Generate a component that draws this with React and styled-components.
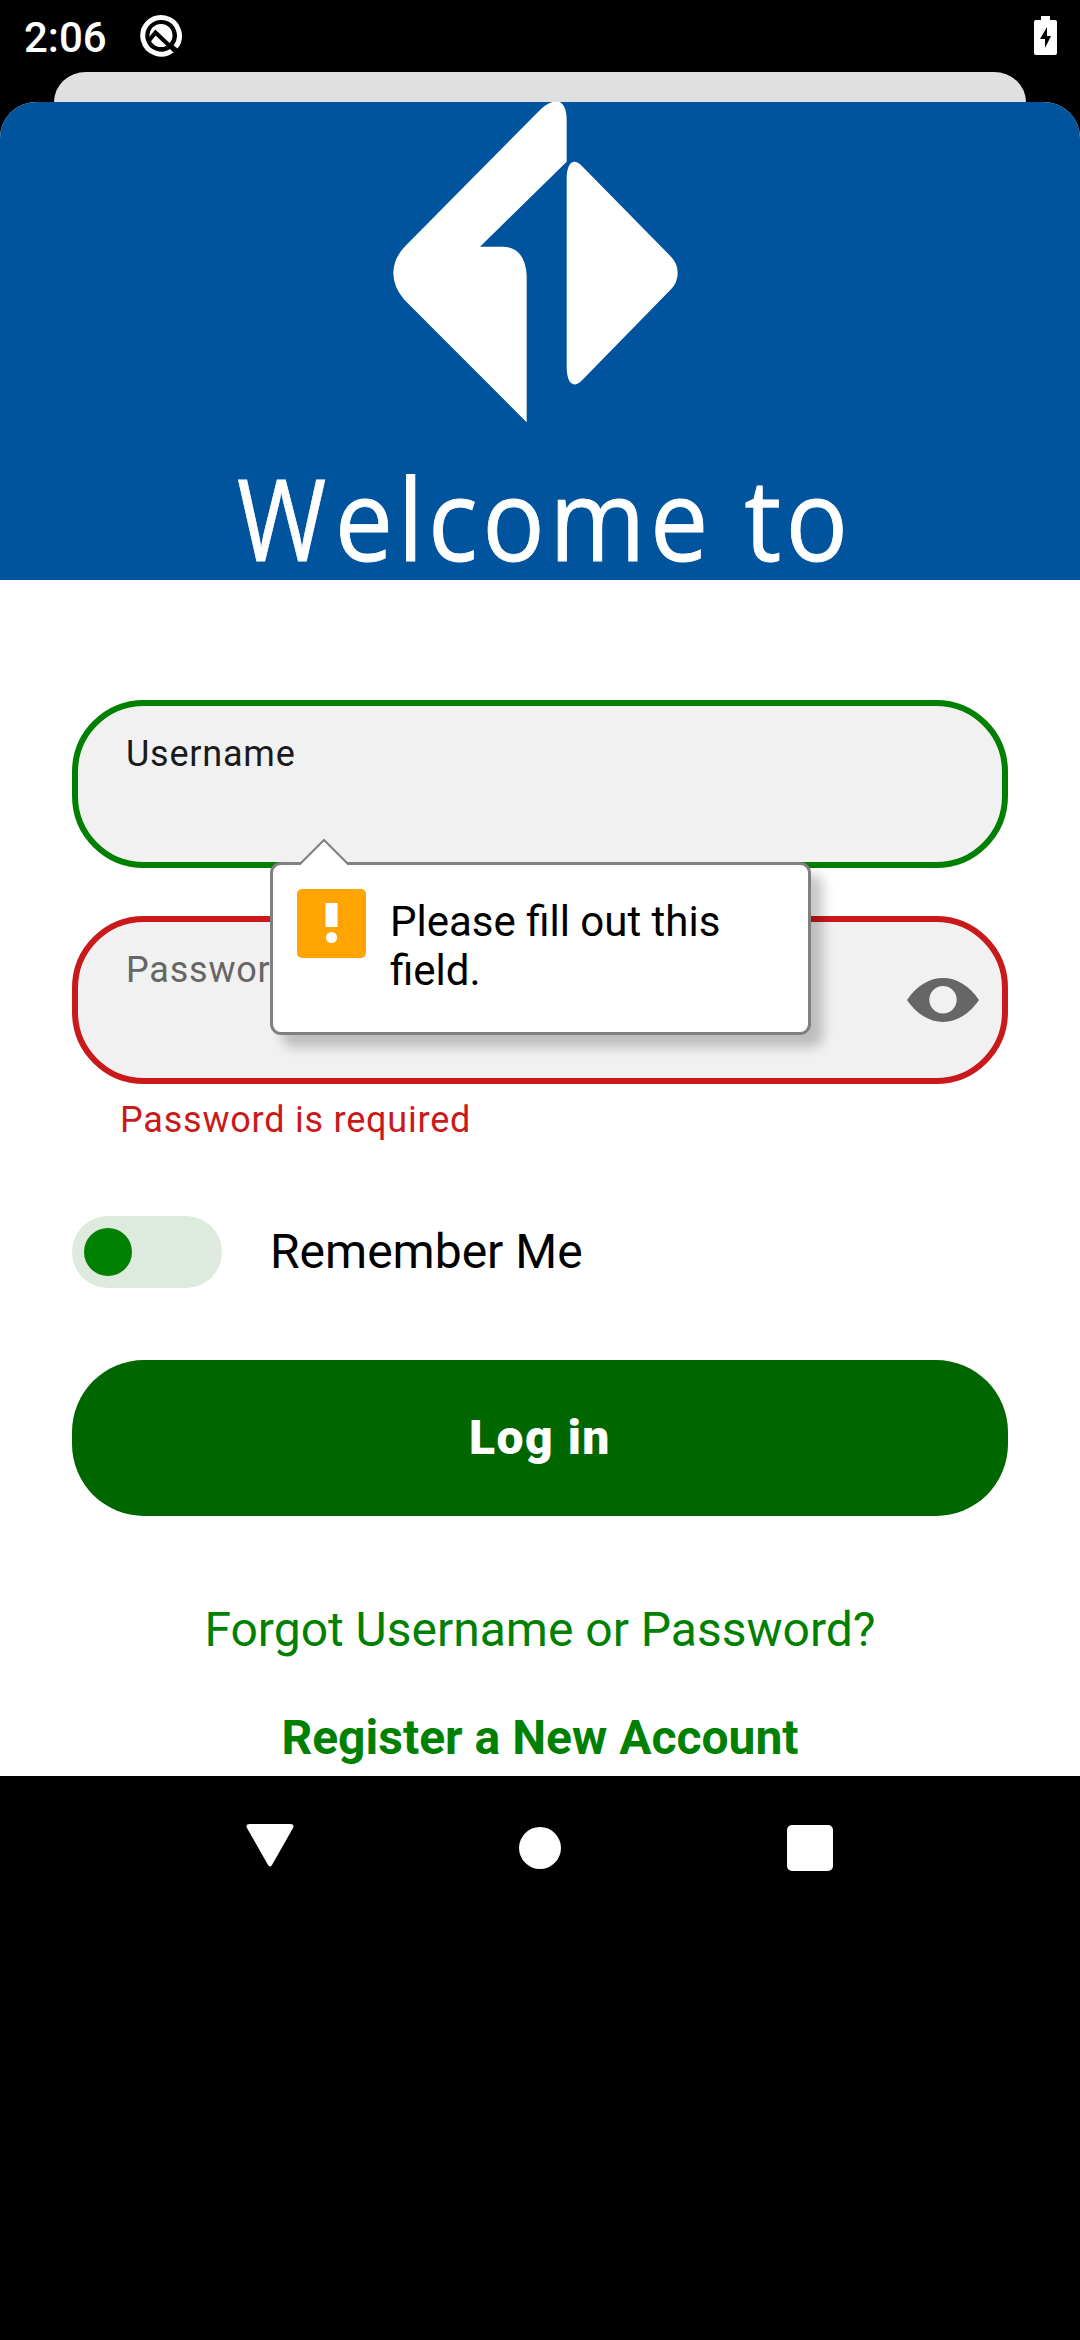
import React from "react";
import styled, { createGlobalStyle } from "styled-components";

const Global = createGlobalStyle`
  *, *::before, *::after { box-sizing: border-box; }
  html, body { margin: 0; background: #000; }
  body { font-family: Roboto, "Noto Sans", sans-serif; font-weight: 400; }
  svg { display: block; flex: none; }
`;

const Screen = styled.main`
  width: 1080px;
  height: 2340px;
  display: flex;
  flex-direction: column;
  background: #000;
  overflow: hidden;
`;

const StatusBar = styled.header`
  height: 72px;
  padding: 0 23px 0 24px;
  display: flex;
  align-items: center;
  color: #fff;
`;

const Clock = styled.time`
  width: 115px;
  font-size: 42px;
  line-height: 48px;
  font-weight: 500;
  padding-top: 3px;
`;

const BatterySlot = styled.div`
  margin-left: auto;
`;

const BackSheet = styled.div`
  height: 30px;
  margin: 0 54px;
  border-radius: 32px 32px 0 0 / 30px 30px 0 0;
  background: #e0e0e0;
`;

const Sheet = styled.section`
  height: 1674px;
  border-radius: 36px 36px 0 0;
  background: #fff;
  overflow: hidden;
`;

const Hero = styled.div`
  height: 478px;
  background: #00549d;
  display: flex;
  flex-direction: column;
  padding-left: 370px;
`;

const Welcome = styled.h1`
  margin: 25px 0 0 -133px;
  font-family: "Open Sans", "Noto Sans", sans-serif;
  font-size: 113px;
  line-height: 140px;
  font-weight: 400;
  letter-spacing: 4.8px;
  white-space: nowrap;
  color: #fff;
  -webkit-text-stroke: 0.8px #fff;
  transform: scaleX(0.92);
  transform-origin: left;
`;

const Initial = styled.span`
  display: inline-block;
  margin-right: -3px;
  transform: scaleX(0.93);
  transform-origin: left;
`;

const Form = styled.form`
  padding: 120px 72px 0;
  display: flex;
  flex-direction: column;
`;

const Field = styled.div`
  position: relative;
  height: 168px;
  border: 6px solid ${(p) => p.$tone};
  border-radius: 72px;
  background: #f1f1f1;
  padding: 26px 23px 0 48px;
  display: flex;
  justify-content: space-between;
  margin-bottom: ${(p) => p.$gap}px;
`;

const Label = styled.label`
  font-size: 36px;
  line-height: 44px;
  letter-spacing: 0.78px;
  color: ${(p) => p.$color};
`;

const EyeSlot = styled.span`
  padding-top: 30px;
`;

const ErrorText = styled.p`
  margin: 0 0 74px 48px;
  font-size: 36px;
  line-height: 44px;
  letter-spacing: 0.78px;
  color: #ca191b;
`;

const RememberRow = styled.div`
  height: 72px;
  display: flex;
  align-items: center;
  gap: 48px;
  font-size: 48px;
  line-height: 56px;
  color: #000;
`;

const Toggle = styled.span`
  width: 150px;
  height: 72px;
  border-radius: 36px;
  padding: 12px;
  background: #deeade;
`;

const Knob = styled.span`
  display: block;
  width: 48px;
  height: 48px;
  border-radius: 50%;
  background: #008000;
`;

const LoginButton = styled.button`
  height: 156px;
  margin: 72px 0 86px;
  border: 0;
  border-radius: 72px;
  background: #006600;
  color: #fff;
  font: 900 48px/56px Roboto, sans-serif;
  letter-spacing: 1.5px;
`;

const TextLink = styled.a`
  align-self: center;
  font-size: 48px;
  line-height: 56px;
  margin-bottom: 52px;
  color: #008000;
  white-space: nowrap;
  font-weight: ${(p) => (p.$strong ? 700 : 400)};
`;

const Tooltip = styled.div`
  position: absolute;
  z-index: 2;
  top: 156px;
  left: 192px;
  width: 541px;
  height: 173px;
  border: 3px solid #808080;
  border-radius: 11px;
  background: #fff;
  box-shadow: 12px 12px 12px rgba(0, 0, 0, 0.22);
  display: flex;
  gap: 24px;
  padding: 24px 24px 0;
`;

const Arrow = styled.svg`
  position: absolute;
  top: -27px;
  left: 26px;
`;

const TooltipText = styled.p`
  margin: 8px 0 0;
  font-size: 42px;
  line-height: 49px;
  color: #000;
`;

const NavBar = styled.nav`
  height: 144px;
  padding: 0 135px;
  display: grid;
  grid-template-columns: repeat(3, 1fr);
  align-items: center;
  justify-items: center;
`;

function QIcon() {
  return (
    <svg width="44" height="44" viewBox="0 0 44 44" fill="none">
      <path d="M33.8 35.9A18.3 18.3 0 1 1 36.6 33" stroke="#fff" strokeWidth="5" />
      <circle cx="22" cy="21.5" r="11.5" fill="#fff" />
      <path d="M10 26.5L16.5 18.5L36 37" stroke="#000" strokeWidth="4.2" />
    </svg>
  );
}

function BatteryIcon() {
  return (
    <svg width="24" height="40" viewBox="0 0 24 40">
      <path d="M8 0h9v4h5q2 0 2 2v31q0 2-2 2H3q-2 0-2-2V6q0-2 2-2h5z" fill="#fff" />
      <path d="M14 11v9h4L12 32v-9H7z" fill="#000" />
    </svg>
  );
}

function BrandMark() {
  return (
    <svg width="340" height="320" viewBox="0 36 1020 960" fill="#fff">
      <path d="M590 215V90C590 18 545 22 504 66L106 468Q70 505 70 550Q70 592 103 629L470 997V556Q465 472 398 470H330Z" />
      <path d="M590 262C592 214 612 206 632 224L903 500Q923 520 923 548Q923 577 903 598L634 873C612 893 592 885 590 835Z" />
    </svg>
  );
}

function EyeIcon() {
  return (
    <svg width="72" height="44" viewBox="0 0 72 44">
      <path
        fillRule="evenodd"
        fill="#666"
        d="M0 22C20-7.3 52-7.3 72 22C52 51.3 20 51.3 0 22ZM36 8a13.7 13.7 0 1 0 0 27.4a13.7 13.7 0 1 0 0-27.4Z"
      />
    </svg>
  );
}

function WarningIcon() {
  return (
    <svg width="69" height="69" viewBox="0 0 69 69">
      <rect width="69" height="69" rx="5" fill="#ffa400" />
      <rect x="28.5" y="14" width="12" height="24" fill="#fff" />
      <circle cx="34.5" cy="48.5" r="5.6" fill="#fff" />
    </svg>
  );
}

function ValidationTooltip({ children }) {
  return (
    <Tooltip role="alert">
      <Arrow width="50" height="28" viewBox="0 0 50 28">
        <path d="M1 27L25 2L49 27V28H1Z" fill="#fff" />
        <path d="M0.5 26.5L25 2L49.5 26.5" fill="none" stroke="#808080" strokeWidth="2" />
      </Arrow>
      <WarningIcon />
      <TooltipText>{children}</TooltipText>
    </Tooltip>
  );
}

export default function App() {
  return (
    <>
      <Global />
      <Screen>
        <StatusBar>
          <Clock>2:06</Clock>
          <QIcon />
          <BatterySlot>
            <BatteryIcon />
          </BatterySlot>
        </StatusBar>
        <BackSheet />
        <Sheet>
          <Hero>
            <BrandMark />
            <Welcome>
              <Initial>W</Initial>elcome to
            </Welcome>
          </Hero>
          <Form>
            <Field $tone="#008000" $gap={48}>
              <Label $color="#1a1a1a">Username</Label>
              <ValidationTooltip>Please fill out this field.</ValidationTooltip>
            </Field>
            <Field $tone="#ca191b" $gap={14}>
              <Label $color="#666">Password</Label>
              <EyeSlot>
                <EyeIcon />
              </EyeSlot>
            </Field>
            <ErrorText>Password is required</ErrorText>
            <RememberRow>
              <Toggle>
                <Knob />
              </Toggle>
              Remember Me
            </RememberRow>
            <LoginButton type="button">Log in</LoginButton>
            <TextLink>Forgot Username or Password?</TextLink>
            <TextLink $strong>Register a New Account</TextLink>
          </Form>
        </Sheet>
        <NavBar>
          <svg width="48" height="48" viewBox="0 0 48 48">
            <path d="M4 0H44Q49 0 47 4L26 41Q24 44 22 41L1 4Q-1 0 4 0Z" fill="#fff" />
          </svg>
          <svg width="42" height="42" viewBox="0 0 42 42">
            <circle cx="21" cy="21" r="21" fill="#fff" />
          </svg>
          <svg width="46" height="46" viewBox="0 0 46 46">
            <rect width="46" height="46" rx="5" fill="#fff" />
          </svg>
        </NavBar>
      </Screen>
    </>
  );
}
